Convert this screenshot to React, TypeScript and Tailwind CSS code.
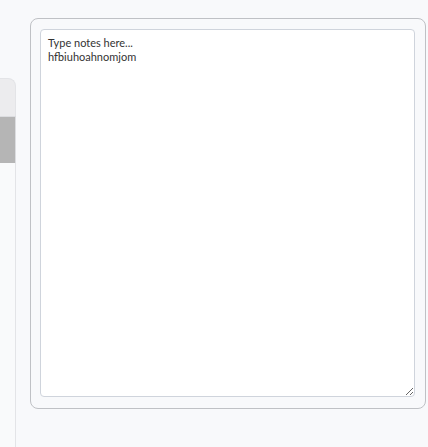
import React from "react";

const SidePanel = () => (
  <div className="mt-[78px] flex w-[16px] shrink-0 flex-col">
    <div className="h-[38px] rounded-tr-[8px] border-r border-t border-[#e3e4e7] bg-[#ececee]" />
    <div className="h-[47px] border-r border-t border-[#dcdde0] bg-[#b5b5b5]" />
    <div className="flex-1 border-r border-[#e3e4e7] bg-[#f9fafb]" />
  </div>
);

const NotesCard = () => (
  <div className="ml-[14px] mt-[18px] flex h-[391px] w-[396px] flex-col rounded-[8px] border border-[#bfc1c5] bg-[#f8f9fb] pb-[11px] pl-[9px] pr-[10px] pt-[10px]">
    <textarea
      className="h-full w-full resize-y rounded-[4px] border border-[#cfd4dc] bg-white px-[7px] py-[6px] text-[11px] leading-[14px] text-[#333] outline-none"
      style={{ fontFamily: "Lato, 'Open Sans', sans-serif" }}
      defaultValue={"Type notes here...\nhfbiuhoahnomjom"}
    />
  </div>
);

export default function App() {
  return (
    <div className="flex h-[447px] w-full bg-[#f8f9fb]">
      <SidePanel />
      <NotesCard />
    </div>
  );
}
